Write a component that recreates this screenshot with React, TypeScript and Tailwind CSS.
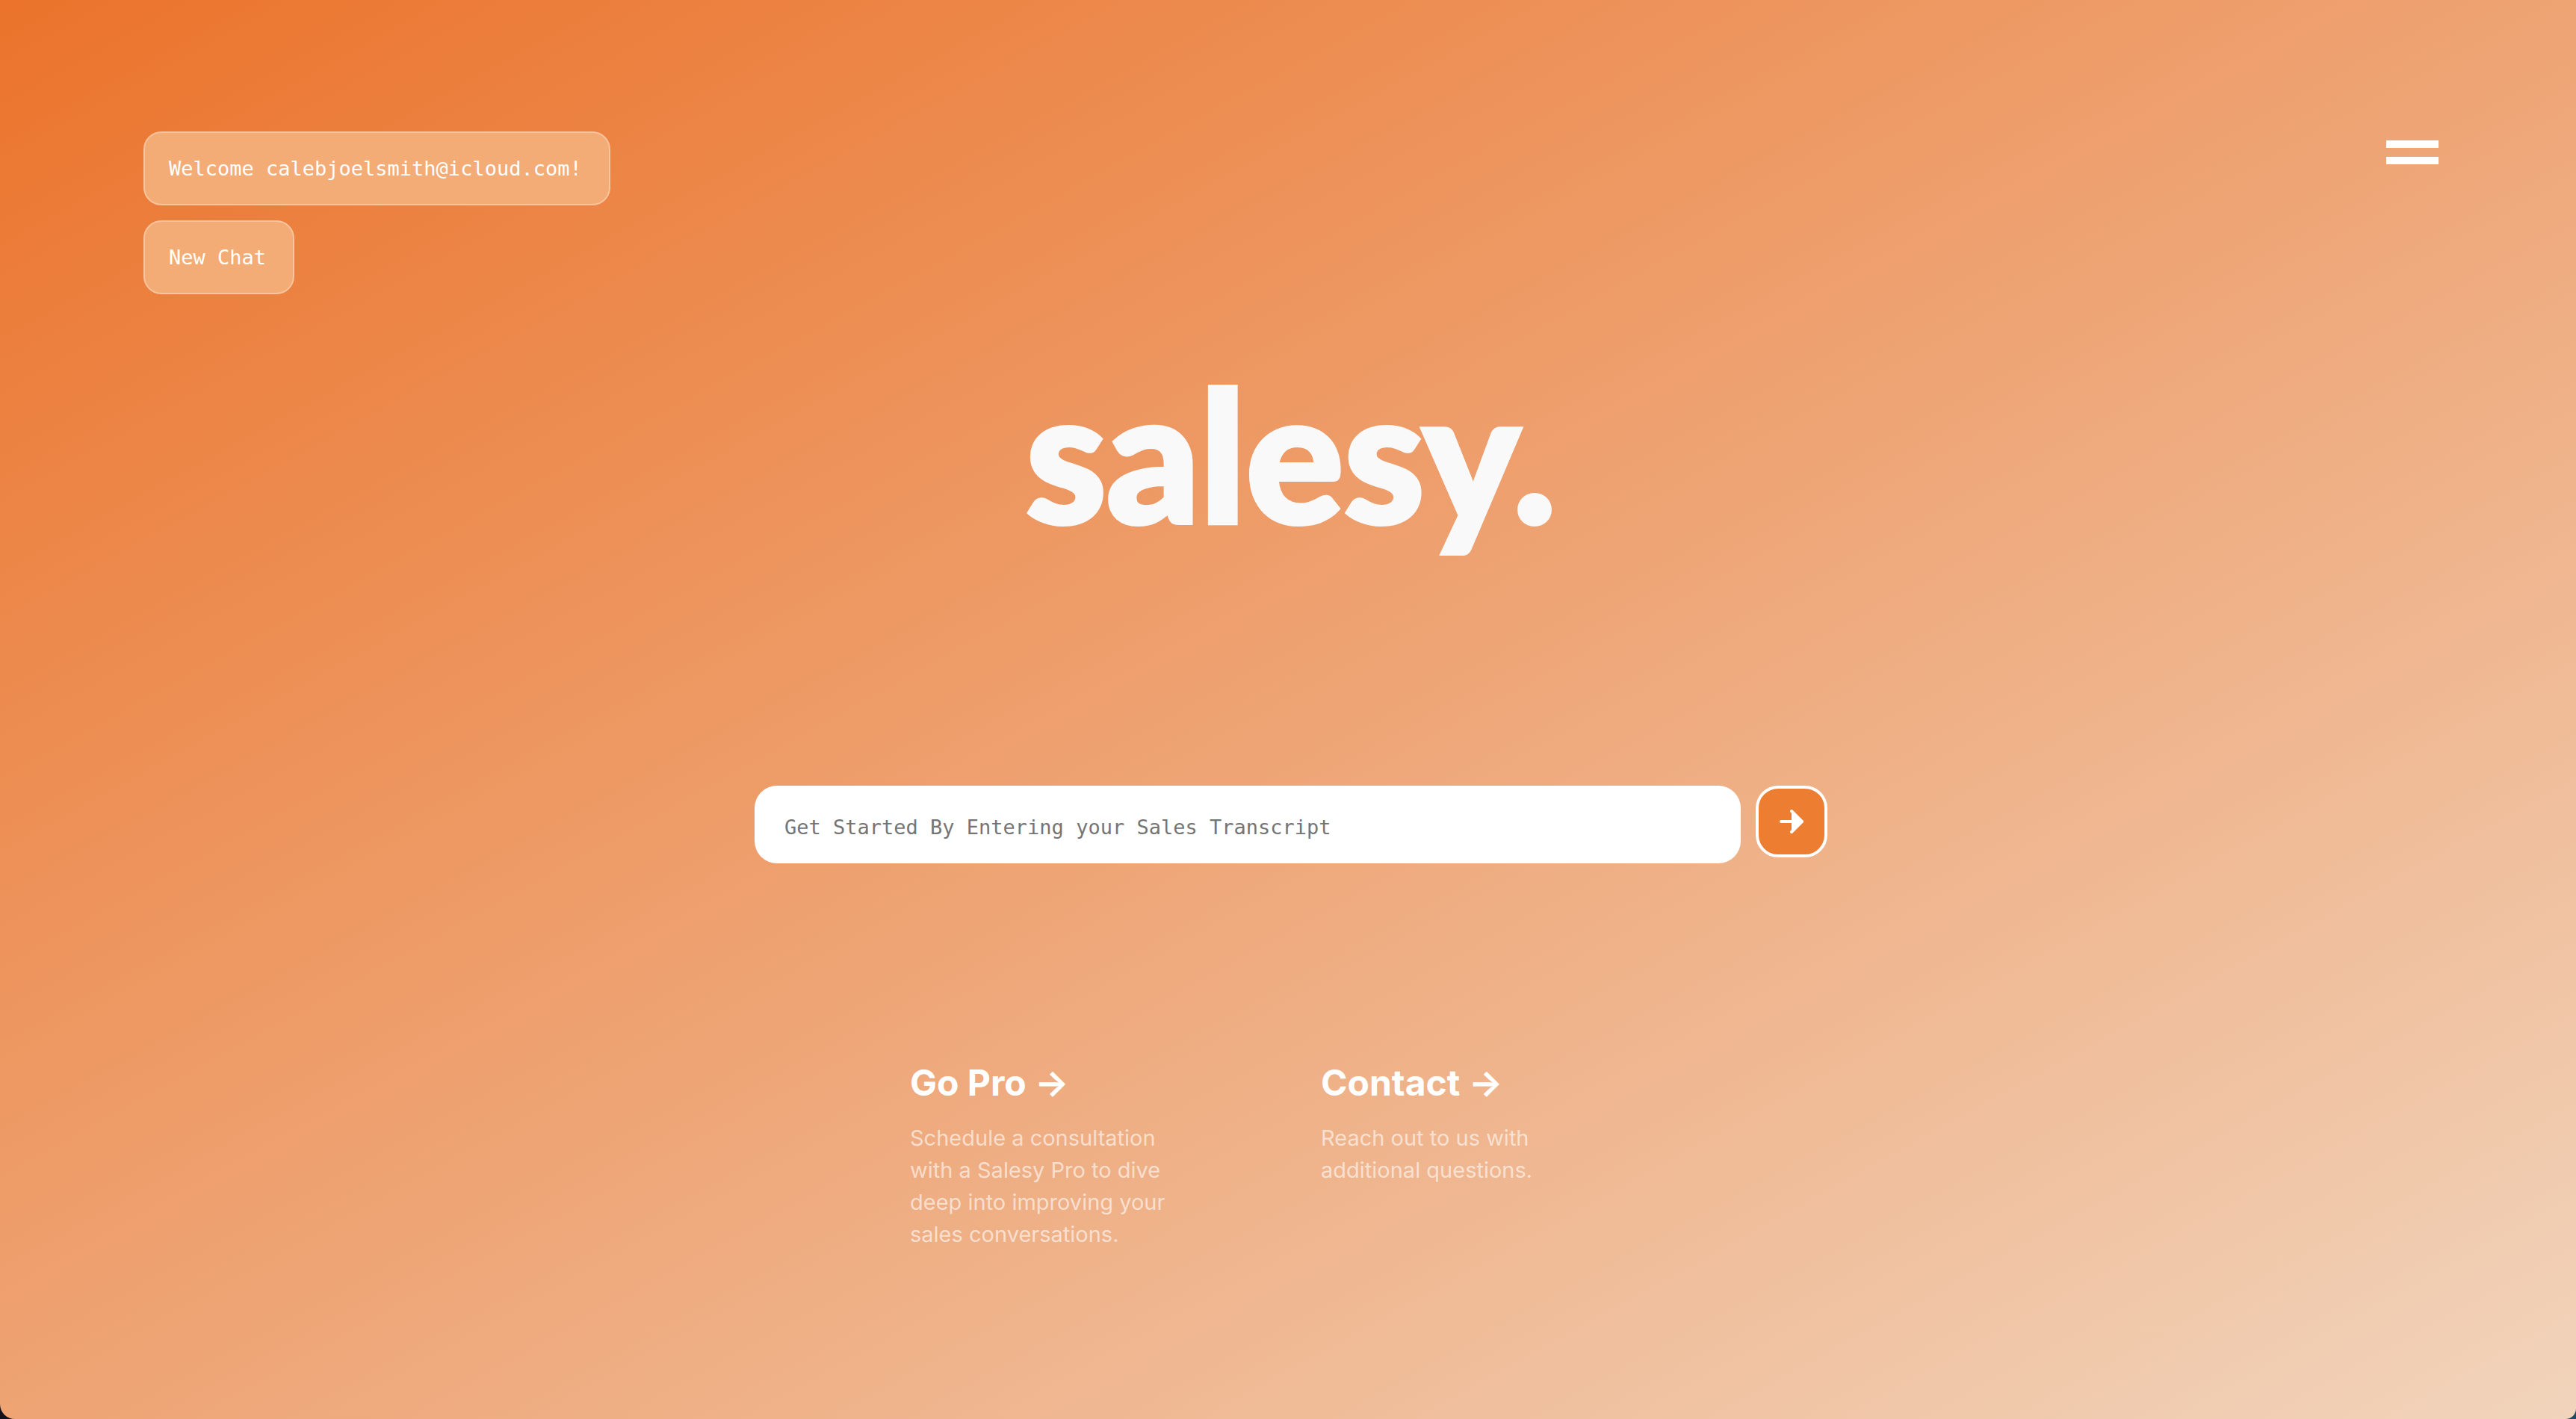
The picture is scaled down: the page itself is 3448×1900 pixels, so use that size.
import React from "react";
import { ArrowRight } from "lucide-react";

const pill =
  "rounded-3xl border-2 border-[#f9c49c] bg-[#f4ac77] py-7 pr-9 pl-8 font-['DejaVu_Sans_Mono',monospace] text-[27px] leading-[39px] text-white";

const links = [
  {
    title: "Go Pro",
    text: "Schedule a consultation with a Salesy Pro to dive deep into improving your sales conversations.",
  },
  { title: "Contact", text: "Reach out to us with additional questions." },
];

export default function App() {
  return (
    <div className="min-h-screen bg-linear-to-r from-[#14121a] to-[#1f4a66] font-['Inter',sans-serif]">
      <div className="flex min-h-screen flex-col rounded-br-[14px] rounded-bl-[20px] bg-linear-to-br/srgb from-[#eb732b] to-[#f1d4bc] pt-44">
        <header className="flex items-start justify-between pr-46 pl-48">
          <div className="flex flex-col items-start gap-5">
            <p className={pill}>Welcome calebjoelsmith@icloud.com!</p>
            <button type="button" className={pill}>
              New Chat
            </button>
          </div>
          <button type="button" aria-label="Menu" className="mt-3 flex w-[70px] flex-col gap-3">
            <span className="h-2.5 w-full bg-white" />
            <span className="h-2.5 w-full bg-white" />
          </button>
        </header>

        <main className="flex flex-col items-center">
          <h1 className="mt-[72px] pl-2 font-['Lato',sans-serif] text-[244px] leading-[280px] font-black text-[#f9f9f9] [-webkit-text-stroke:6px_#f9f9f9]">
            salesy.
          </h1>

          <form className="mt-[306px] ml-2 flex items-start gap-5" onSubmit={(e) => e.preventDefault()}>
            <input
              type="text"
              aria-label="Sales transcript"
              placeholder="Get Started By Entering your Sales Transcript"
              className="h-[104px] w-[1320px] rounded-[30px] bg-white px-10 pt-1.5 font-['DejaVu_Sans_Mono',monospace] text-[27px] text-[#333] outline-none placeholder:text-[#757575]"
            />
            <button
              type="submit"
              aria-label="Send"
              className="flex size-24 items-center justify-center rounded-[30px] border-4 border-white bg-[#ed7d31] text-white"
            >
              <ArrowRight size={48} fill="white" />
            </button>
          </form>

          <nav className="mt-[264px] grid w-[1100px] grid-cols-2">
            {links.map((l) => (
              <a key={l.title} href="#" className="block px-11">
                <h2 className="text-5xl leading-[60px] font-bold text-white">{l.title} -&gt;</h2>
                <p className="mt-5.5 w-[360px] text-[29px] leading-[43px] text-white/60">{l.text}</p>
              </a>
            ))}
          </nav>
        </main>
      </div>
    </div>
  );
}
